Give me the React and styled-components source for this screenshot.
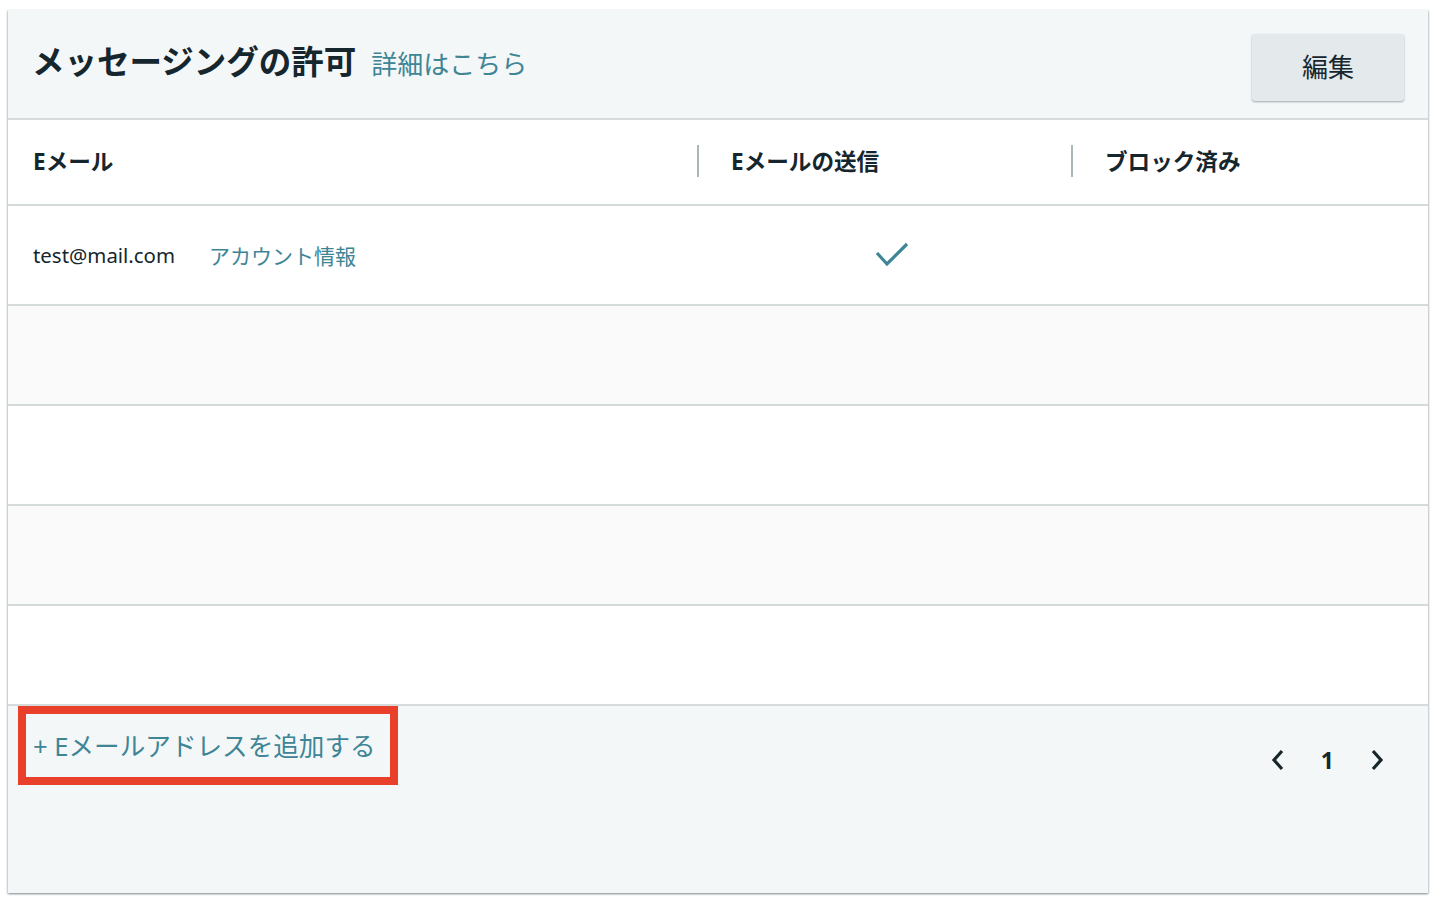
import React from 'react';
import styled, { createGlobalStyle } from 'styled-components';

// ===== colours =====
const INK = '#16262e';
const LINK = '#3e8596';
const LINE = '#d5dbdb';
const PANEL = '#f4f7f8';

const GlobalStyle = createGlobalStyle`
  html, body {
    margin: 0;
    padding: 0;
    background: #ffffff;
  }
  body {
    font-family: "Noto Sans", "Noto Sans CJK JP", sans-serif;
    color: ${INK};
  }
`;

const Page = styled.div`
  padding: 10px 8px 13px 8px;
`;

const Card = styled.section`
  width: 1420px;
  background: #ffffff;
  box-shadow: 0 1px 2px 0 rgba(0, 28, 36, 0.3), 1px 1px 2px 0 rgba(0, 28, 36, 0.15),
    -1px 1px 2px 0 rgba(0, 28, 36, 0.15);
`;

const Header = styled.header`
  display: flex;
  align-items: center;
  justify-content: space-between;
  height: 110px;
  padding: 0 24px 0 24px;
  box-sizing: border-box;
  background: ${PANEL};
  border-bottom: 2px solid ${LINE};
`;

const TitleGroup = styled.div`
  display: flex;
  align-items: baseline;
  gap: 15px;
  margin-top: -4px;
`;

const Title = styled.h2`
  margin: 0;
  font-size: 32.5px;
  font-weight: 700;
  line-height: 1.2;
  color: ${INK};
`;

const Link = styled.a`
  color: ${LINK};
  font-size: ${p => p.size || 26}px;
  text-decoration: none;
  cursor: pointer;
`;

const EditButton = styled.button`
  width: 152px;
  height: 67px;
  margin-top: 6px;
  padding-bottom: 5px;
  border: none;
  border-radius: 3px;
  background: #e4eaeb;
  box-shadow: 0 1px 2px rgba(0, 28, 36, 0.35);
  font-family: "Noto Sans CJK JP", sans-serif;
  font-size: 26px;
  color: ${INK};
  cursor: pointer;
`;

const Grid = styled.div`
  display: grid;
  grid-template-columns: 689px 374px 1fr;
`;

const HeadCell = styled.div`
  position: relative;
  height: 84px;
  box-sizing: border-box;
  padding-bottom: 4px;
  display: flex;
  align-items: center;
  padding-left: ${p => (p.first ? 25 : 34)}px;
  font-size: 22.6px;
  font-weight: 700;
  color: ${INK};
  border-bottom: 2px solid ${LINE};
  height: 86px;

  ${p =>
    p.divider &&
    `
    &::before {
      content: '';
      position: absolute;
      left: 0;
      top: 25px;
      width: 2px;
      height: 32px;
      background: #aab7b8;
    }
  `}
`;

const Cell = styled.div`
  height: 98px;
  display: flex;
  align-items: center;
  padding-left: ${p => p.pad || 0}px;
  background: ${p => (p.shade ? '#fafafa' : '#ffffff')};
  border-bottom: 2px solid ${LINE};
  font-size: 20px;
  color: ${INK};
`;

const Email = styled.span`
  margin-right: 34px;
  font-size: 20.4px;
`;

const Footer = styled.footer`
  display: flex;
  justify-content: space-between;
  align-items: flex-start;
  height: 187px;
  padding: 0 44px 0 10px;
  box-sizing: border-box;
  background: ${PANEL};
`;

const AddBox = styled.div`
  border: 8px solid #e8402a;
  padding: 0 14px 0 7px;
  height: 63px;
  display: flex;
  align-items: center;
`;

const AddLink = styled.a`
  color: ${LINK};
  font-size: 25.6px;
  text-decoration: none;
  margin-top: -2px;
  white-space: nowrap;
`;

const Pager = styled.nav`
  display: flex;
  align-items: center;
  gap: 36px;
  margin-top: 38px;
  color: ${INK};
`;

const PageNum = styled.span`
  font-family: "Noto Sans", sans-serif;
  font-size: 23px;
  font-weight: 700;
`;

const Check = () => (
  <svg width="34" height="26" viewBox="0 0 34 26">
    <polyline
      points="2,11 12,22 32,2"
      fill="none"
      stroke={LINK}
      strokeWidth="3.2"
    />
  </svg>
);

const Chevron = ({ dir }) => (
  <svg width="14" height="22" viewBox="0 0 14 22">
    <polyline
      points={dir === 'left' ? '11,2 3,11 11,20' : '3,2 11,11 3,20'}
      fill="none"
      stroke={INK}
      strokeWidth="3.2"
    />
  </svg>
);

const rows = [0, 1, 2, 3];

export default function App() {
  return (
    <Page>
      <GlobalStyle />
      <Card>
        <Header>
          <TitleGroup>
            <Title>メッセージングの許可</Title>
            <Link>詳細はこちら</Link>
          </TitleGroup>
          <EditButton>編集</EditButton>
        </Header>

        <Grid>
          <HeadCell first>Eメール</HeadCell>
          <HeadCell divider>Eメールの送信</HeadCell>
          <HeadCell divider>ブロック済み</HeadCell>

          <Cell pad={25}>
            <Email>test@mail.com</Email>
            <Link size={21}>アカウント情報</Link>
          </Cell>
          <Cell pad={178}>
            <Check />
          </Cell>
          <Cell />

          {rows.map(i => (
            <React.Fragment key={i}>
              <Cell shade={i % 2 === 0} />
              <Cell shade={i % 2 === 0} />
              <Cell shade={i % 2 === 0} />
            </React.Fragment>
          ))}
        </Grid>

        <Footer>
          <AddBox>
            <AddLink>+ Eメールアドレスを追加する</AddLink>
          </AddBox>
          <Pager>
            <Chevron dir="left" />
            <PageNum>1</PageNum>
            <Chevron dir="right" />
          </Pager>
        </Footer>
      </Card>
    </Page>
  );
}
